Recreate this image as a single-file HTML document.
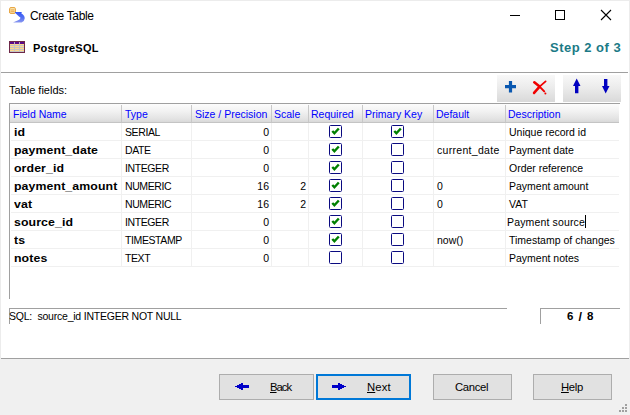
<!DOCTYPE html>
<html><head><meta charset="utf-8">
<style>
*{box-sizing:border-box}
html,body{margin:0;padding:0}
body{width:630px;height:415px;overflow:hidden;position:relative;background:#fff;font-family:"Liberation Sans",sans-serif;color:#000}
.a{position:absolute;white-space:pre}
.t11{font-size:11px;line-height:13px}
.hd{position:absolute;top:103px;left:10px;width:609px;height:20px;border-top:1px solid #a0a0a0;background:linear-gradient(#fcfcfc,#f2f2f2 40%,#e2e2e2 85%,#d8d8d8);border-bottom:1px solid #c4c4c4}
.hc{position:absolute;top:1px;height:18px;font-size:10.5px;line-height:18px;color:#0000ff;padding-left:3px}
.vs{position:absolute;top:1px;width:1px;height:17px;background:#c8c8c8}
.rl{position:absolute;left:11px;width:608px;height:1px;background:#f0f0f0}
.cl{position:absolute;top:123px;width:1px;height:144px;background:#f0f0f0}
.cell{position:absolute;font-size:10.5px;line-height:17px;height:17px;top:0}
.cell.b{font-size:11.5px;letter-spacing:0.1px;transform:scaleX(1.07);transform-origin:0 0}
.ty{letter-spacing:-0.4px}
.b{font-weight:bold}
.cb{position:absolute;width:13px;height:13px;border:1px solid #0a0a80;border-radius:1.5px;background:#fff}
.btn{position:absolute;top:374px;height:26px;border:1px solid #adadad;background:#e1e1e1;font-size:12px;line-height:24px}
.bt{top:380px;font-size:11.3px;line-height:15px;letter-spacing:-0.35px}
.bt u{text-decoration-thickness:1px;text-underline-offset:1px}
</style></head><body>
<!-- window borders -->
<div class="a" style="left:0;top:0;width:630px;height:1px;background:#ececec"></div>
<div class="a" style="left:0;top:0;width:1px;height:415px;background:#ececec"></div>
<div class="a" style="left:629px;top:0;width:1px;height:359px;background:#ececec"></div>

<!-- title icon -->
<svg class="a" style="left:8px;top:6px" width="19" height="19" viewBox="0 0 19 19">
  <path d="M2.5 1H6.5L8 2.5V6.5L6.5 8H2.5L1 6.5V2.5Z" fill="#e8a848"/>
  <path d="M2.8 2H6.2L7 2.8V6.2L6.2 7H2.8L2 6.2V2.8Z" fill="#f8e2a8"/>
  <rect x="2.5" y="3.5" width="4" height="0.9" fill="#e8a040"/><rect x="2.5" y="5.3" width="4" height="0.9" fill="#e8a040"/>
  <defs><linearGradient id="ag" x1="0" y1="0" x2="0" y2="1"><stop offset="0" stop-color="#3256f6"/><stop offset="0.55" stop-color="#5470f2"/><stop offset="1" stop-color="#8c9af0"/></linearGradient></defs>
  <path d="M7 6L13.8 6L13.4 7.6Q16.9 9.6 16.7 12.6Q16.4 15.8 13.6 16.6L5 16.6L7.2 15.4Q12.6 14.2 12.4 11.6L11.2 10.8L7 6.8Z" fill="url(#ag)"/>
</svg>
<div class="a" style="left:30px;top:8px;font-size:12px;line-height:16px;letter-spacing:-0.35px;color:#000">Create Table</div>

<!-- window controls -->
<div class="a" style="left:510px;top:15px;width:10px;height:1px;background:#000"></div>
<div class="a" style="left:555px;top:10px;width:10px;height:10px;border:1px solid #000"></div>
<svg class="a" style="left:600px;top:9px" width="12" height="12" viewBox="0 0 12 12"><path d="M1 1L11 11M11 1L1 11" stroke="#000" stroke-width="1.1"/></svg>

<!-- header -->
<svg class="a" style="left:9px;top:41px" width="16" height="12" viewBox="0 0 16 12" shape-rendering="crispEdges">
  <rect x="0" y="0" width="16" height="12" fill="#6e2848"/>
  <rect x="1" y="1" width="14" height="10" fill="#c4c4c4"/>
  <rect x="1" y="1" width="14" height="2" fill="#5a0a8a"/><rect x="5" y="1" width="1" height="2" fill="#b8b0c0"/><rect x="10" y="1" width="1" height="2" fill="#b8b0c0"/>
  <g fill="#fcd88a">
  <rect x="1" y="3" width="4" height="1"/><rect x="6" y="3" width="4" height="1"/><rect x="11" y="3" width="4" height="1"/>
  <rect x="1" y="5" width="4" height="1"/><rect x="6" y="5" width="4" height="1"/><rect x="11" y="5" width="4" height="1"/>
  <rect x="1" y="7" width="4" height="1"/><rect x="6" y="7" width="4" height="1"/><rect x="11" y="7" width="4" height="1"/>
  <rect x="1" y="9" width="4" height="1"/><rect x="6" y="9" width="4" height="1"/><rect x="11" y="9" width="4" height="1"/>
  </g>
</svg>
<div class="a b" style="left:33px;top:41px;font-size:11px;line-height:15px;letter-spacing:0.2px">PostgreSQL</div>
<div class="a b" style="left:550px;top:40px;font-size:13px;line-height:15px;letter-spacing:0.5px;color:#1b7a86">Step 2 of 3</div>

<div class="a" style="left:1px;top:72px;width:627px;height:1px;background:#a0a0a0"></div>
<div class="a" style="left:1px;top:73px;width:627px;height:1px;background:#fff"></div>

<div class="a t11" style="left:9px;top:84px">Table fields:</div>

<!-- toolbar -->
<div class="a" style="left:497px;top:75px;width:58px;height:27px;background:linear-gradient(#f8f8f8,#ececec 45%,#d9d9d9)"></div>
<div class="a" style="left:563px;top:75px;width:58px;height:27px;background:linear-gradient(#f8f8f8,#ececec 45%,#d9d9d9)"></div>
<svg class="a" style="left:504px;top:80px" width="14" height="14" viewBox="0 0 14 14"><path d="M6.5 1V12.5M1 6.7H12" stroke="#0a58b0" stroke-width="3.2"/></svg>
<svg class="a" style="left:530px;top:78px" width="20" height="20" viewBox="0 0 20 20"><g stroke="#f00000" fill="none" stroke-linecap="round"><path d="M4.3 4.3L9.6 8.6" stroke-width="2.6"/><path d="M9.6 8.6L14.2 13.4" stroke-width="2"/><path d="M15.6 3.4L9.6 8.6" stroke-width="1.8"/><path d="M9.6 8.6L4.1 14.9" stroke-width="2.6"/></g><circle cx="15.4" cy="15.6" r="1" fill="#f00000"/></svg>
<svg class="a" style="left:572px;top:78px" width="10" height="16" viewBox="0 0 10 16"><path d="M4.7 0.5L8.5 8H6.4V15.2H3V8H1Z" fill="#0000c0"/></svg>
<svg class="a" style="left:601px;top:78px" width="10" height="16" viewBox="0 0 10 16"><path d="M4.7 15.5L8.5 8H6.4V1H3V8H1Z" fill="#0000c0"/></svg>

<!-- grid -->
<div class="a" style="left:9px;top:103px;width:1px;height:196px;background:#a0a0a0"></div>
<div class="a" style="left:619px;top:103px;width:1px;height:1px;background:#a0a0a0"></div>
<div class="hd">
  <div class="hc" style="left:0">Field Name</div>
  <div class="vs" style="left:111px"></div>
  <div class="hc" style="left:112px">Type</div>
  <div class="vs" style="left:181px"></div>
  <div class="hc" style="left:182px">Size / Precision</div>
  <div class="vs" style="left:261px"></div>
  <div class="hc" style="left:261px">Scale</div>
  <div class="vs" style="left:298px"></div>
  <div class="hc" style="left:298px">Required</div>
  <div class="vs" style="left:352px"></div>
  <div class="hc" style="left:352px">Primary Key</div>
  <div class="vs" style="left:423px"></div>
  <div class="hc" style="left:423px">Default</div>
  <div class="vs" style="left:495px"></div>
  <div class="hc" style="left:495px">Description</div>
</div>

<div class="rl" style="top:140px"></div>
<div class="rl" style="top:158px"></div>
<div class="rl" style="top:176px"></div>
<div class="rl" style="top:194px"></div>
<div class="rl" style="top:212px"></div>
<div class="rl" style="top:230px"></div>
<div class="rl" style="top:248px"></div>
<div class="rl" style="top:266px"></div>
<div class="cl" style="left:121px"></div>
<div class="cl" style="left:191px"></div>
<div class="cl" style="left:271px"></div>
<div class="cl" style="left:308px"></div>
<div class="cl" style="left:362px"></div>
<div class="cl" style="left:433px"></div>
<div class="cl" style="left:505px"></div>

<!-- rows -->
<div id="rows">
<div class="cell b" style="left:14px;top:124px">id</div>
<div class="cell ty" style="left:125px;top:124px">SERIAL</div>
<div class="cell" style="left:192px;top:124px;width:77px;text-align:right">0</div>
<div class="cb" style="left:329px;top:125px"><svg width="13" height="13" viewBox="0 0 13 13" style="position:absolute;left:-1px;top:-1px"><path d="M3.3 6L5.4 8.3L9.8 3.5" fill="none" stroke="#008000" stroke-width="2.4"/></svg></div>
<div class="cb" style="left:391px;top:125px"><svg width="13" height="13" viewBox="0 0 13 13" style="position:absolute;left:-1px;top:-1px"><path d="M3.3 6L5.4 8.3L9.8 3.5" fill="none" stroke="#008000" stroke-width="2.4"/></svg></div>
<div class="cell" style="left:509px;top:124px">Unique record id</div>
<div class="cell b" style="left:14px;top:142px">payment_date</div>
<div class="cell ty" style="left:125px;top:142px">DATE</div>
<div class="cell" style="left:192px;top:142px;width:77px;text-align:right">0</div>
<div class="cb" style="left:329px;top:143px"><svg width="13" height="13" viewBox="0 0 13 13" style="position:absolute;left:-1px;top:-1px"><path d="M3.3 6L5.4 8.3L9.8 3.5" fill="none" stroke="#008000" stroke-width="2.4"/></svg></div>
<div class="cb" style="left:391px;top:143px"></div>
<div class="cell" style="left:437px;top:142px;letter-spacing:0.3px">current_date</div>
<div class="cell" style="left:509px;top:142px">Payment date</div>
<div class="cell b" style="left:14px;top:160px">order_id</div>
<div class="cell ty" style="left:125px;top:160px">INTEGER</div>
<div class="cell" style="left:192px;top:160px;width:77px;text-align:right">0</div>
<div class="cb" style="left:329px;top:161px"><svg width="13" height="13" viewBox="0 0 13 13" style="position:absolute;left:-1px;top:-1px"><path d="M3.3 6L5.4 8.3L9.8 3.5" fill="none" stroke="#008000" stroke-width="2.4"/></svg></div>
<div class="cb" style="left:391px;top:161px"></div>
<div class="cell" style="left:509px;top:160px">Order reference</div>
<div class="cell b" style="left:14px;top:178px">payment_amount</div>
<div class="cell ty" style="left:125px;top:178px">NUMERIC</div>
<div class="cell" style="left:192px;top:178px;width:77px;text-align:right">16</div>
<div class="cell" style="left:272px;top:178px;width:34px;text-align:right">2</div>
<div class="cb" style="left:329px;top:179px"><svg width="13" height="13" viewBox="0 0 13 13" style="position:absolute;left:-1px;top:-1px"><path d="M3.3 6L5.4 8.3L9.8 3.5" fill="none" stroke="#008000" stroke-width="2.4"/></svg></div>
<div class="cb" style="left:391px;top:179px"></div>
<div class="cell" style="left:437px;top:178px">0</div>
<div class="cell" style="left:509px;top:178px">Payment amount</div>
<div class="cell b" style="left:14px;top:196px">vat</div>
<div class="cell ty" style="left:125px;top:196px">NUMERIC</div>
<div class="cell" style="left:192px;top:196px;width:77px;text-align:right">16</div>
<div class="cell" style="left:272px;top:196px;width:34px;text-align:right">2</div>
<div class="cb" style="left:329px;top:197px"><svg width="13" height="13" viewBox="0 0 13 13" style="position:absolute;left:-1px;top:-1px"><path d="M3.3 6L5.4 8.3L9.8 3.5" fill="none" stroke="#008000" stroke-width="2.4"/></svg></div>
<div class="cb" style="left:391px;top:197px"></div>
<div class="cell" style="left:437px;top:196px">0</div>
<div class="cell" style="left:509px;top:196px">VAT</div>
<div class="cell b" style="left:14px;top:214px">source_id</div>
<div class="cell ty" style="left:125px;top:214px">INTEGER</div>
<div class="cell" style="left:192px;top:214px;width:77px;text-align:right">0</div>
<div class="cb" style="left:329px;top:215px"><svg width="13" height="13" viewBox="0 0 13 13" style="position:absolute;left:-1px;top:-1px"><path d="M3.3 6L5.4 8.3L9.8 3.5" fill="none" stroke="#008000" stroke-width="2.4"/></svg></div>
<div class="cb" style="left:391px;top:215px"></div>
<div class="cell" style="left:507px;top:214px;letter-spacing:0.15px">Payment source</div>
<div class="a" style="left:585px;top:215px;width:1px;height:13px;background:#000"></div>
<div class="cell b" style="left:14px;top:232px">ts</div>
<div class="cell ty" style="left:125px;top:232px">TIMESTAMP</div>
<div class="cell" style="left:192px;top:232px;width:77px;text-align:right">0</div>
<div class="cb" style="left:329px;top:233px"><svg width="13" height="13" viewBox="0 0 13 13" style="position:absolute;left:-1px;top:-1px"><path d="M3.3 6L5.4 8.3L9.8 3.5" fill="none" stroke="#008000" stroke-width="2.4"/></svg></div>
<div class="cb" style="left:391px;top:233px"></div>
<div class="cell" style="left:437px;top:232px">now()</div>
<div class="cell" style="left:509px;top:232px">Timestamp of changes</div>
<div class="cell b" style="left:14px;top:250px">notes</div>
<div class="cell ty" style="left:125px;top:250px">TEXT</div>
<div class="cell" style="left:192px;top:250px;width:77px;text-align:right">0</div>
<div class="cb" style="left:329px;top:251px"></div>
<div class="cb" style="left:391px;top:251px"></div>
<div class="cell" style="left:509px;top:250px">Payment notes</div>
</div><!--/rows-->

<!-- status -->
<div class="a" style="left:9px;top:308px;width:498px;height:1px;background:#a0a0a0"></div>
<div class="a" style="left:9px;top:308px;width:1px;height:16px;background:#a0a0a0"></div>
<div class="a t11" style="left:9px;top:310px;font-size:10.5px;letter-spacing:-0.22px">SQL:  source_id INTEGER NOT NULL</div>
<div class="a" style="left:540px;top:308px;width:80px;height:1px;background:#a0a0a0"></div>
<div class="a" style="left:540px;top:308px;width:1px;height:16px;background:#a0a0a0"></div>
<div class="a b" style="left:567px;top:310px;font-size:11.5px;line-height:13px;letter-spacing:0.9px">6 <span style="font-size:12.5px;position:relative;top:1px">/</span> 8</div>

<!-- bottom area -->
<div class="a" style="left:1px;top:358px;width:628px;height:1px;background:#a0a0a0"></div>
<div class="a" style="left:0;top:359px;width:630px;height:56px;background:#f0f0f0"></div>
<div class="btn" style="left:219px;width:95px"></div>
<div class="btn" style="left:316px;width:95px;border:2px solid #0078d7"></div>
<div class="btn" style="left:433px;width:79px"></div>
<div class="btn" style="left:533px;width:79px"></div>
<svg class="a" style="left:235px;top:383px" width="14" height="7" viewBox="0 0 14 7" shape-rendering="crispEdges" fill="#0000c8"><rect x="0" y="3" width="2" height="1"/><rect x="2" y="2" width="2" height="3"/><rect x="4" y="1" width="2" height="5"/><rect x="6" y="0" width="2" height="7"/><rect x="8" y="2" width="6" height="3"/></svg>
<svg class="a" style="left:332px;top:383px" width="14" height="7" viewBox="0 0 14 7" shape-rendering="crispEdges" fill="#0000c8"><rect x="0" y="2" width="6" height="3"/><rect x="6" y="0" width="2" height="7"/><rect x="8" y="1" width="2" height="5"/><rect x="10" y="2" width="2" height="3"/><rect x="12" y="3" width="2" height="1"/></svg>
<div class="a bt" style="left:270px;letter-spacing:-1px"><u>B</u>ack</div>
<div class="a bt" style="left:367px;letter-spacing:0.1px"><u>N</u>ext</div>
<div class="a bt" style="left:455px">Cancel</div>
<div class="a bt" style="left:561px"><u>H</u>elp</div>
<svg class="a" style="left:619px;top:404px" width="9" height="9" viewBox="0 0 9 9" fill="#a0a0a0">
<rect x="6" y="0" width="2" height="2"/><rect x="3" y="3" width="2" height="2"/><rect x="6" y="3" width="2" height="2"/>
<rect x="0" y="6" width="2" height="2"/><rect x="3" y="6" width="2" height="2"/><rect x="6" y="6" width="2" height="2"/></svg>
</body></html>
